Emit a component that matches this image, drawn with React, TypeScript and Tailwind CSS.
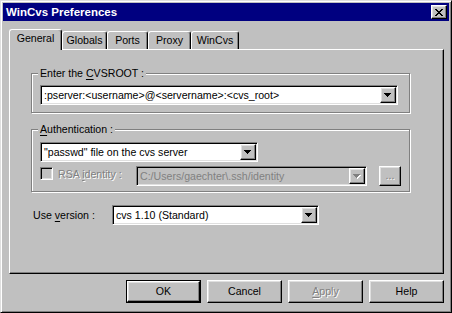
import type { ReactNode } from 'react'

const raised =
  'border border-t-white border-l-white border-r-black border-b-black shadow-[inset_-1px_-1px_#808080,inset_1px_1px_#dfdfdf]'
const sunken =
  'border border-t-[#808080] border-l-[#808080] border-r-white border-b-white shadow-[inset_1px_1px_#000,inset_-1px_-1px_#dfdfdf]'
const etched = "[text-shadow:1px_1px_0_#fff] text-[#808080]"

function Arrow({ disabled }: { disabled?: boolean }) {
  const rows = [
    [0, 7],
    [1, 5],
    [2, 3],
    [3, 1],
  ]
  return (
    <svg width="8" height="5" viewBox="0 0 8 5" shapeRendering="crispEdges">
      {disabled && (
        <g fill="#fff">
          {rows.map(([x, w], i) => (
            <rect key={i} x={x + 1} y={i + 1} width={w} height="1" />
          ))}
        </g>
      )}
      <g fill={disabled ? '#808080' : '#000'}>
        {rows.map(([x, w], i) => (
          <rect key={i} x={x} y={i} width={w} height="1" />
        ))}
      </g>
    </svg>
  )
}

function CloseGlyph() {
  const rows = [
    [0, 2, 6, 2],
    [1, 2, 5, 2],
    [2, 4],
    [3, 2],
    [2, 4],
    [1, 2, 5, 2],
    [0, 2, 6, 2],
  ]
  return (
    <svg width="8" height="7" viewBox="0 0 8 7" shapeRendering="crispEdges">
      {rows.map((r, i) => (
        <g key={i}>
          <rect x={r[0]} y={i} width={r[1]} height="1" />
          {r.length > 2 && <rect x={r[2]} y={i} width={r[3]} height="1" />}
        </g>
      ))}
    </svg>
  )
}

function Combo({ className, value, disabled }: { className: string; value: string; disabled?: boolean }) {
  return (
    <div
      className={`flex h-[20px] p-[1px] ${sunken} ${disabled ? 'bg-[#c0c0c0] text-[#808080]' : 'bg-white text-black'} ${className}`}
    >
      <div className="flex-1 overflow-hidden whitespace-nowrap pl-[2px] leading-[16px]">{value}</div>
      <div className={`flex h-[16px] w-[16px] items-center justify-center bg-[#c0c0c0] pt-[1px] ${raised}`}>
        <Arrow disabled={disabled} />
      </div>
    </div>
  )
}

function Group({ label, className, children }: { label: ReactNode; className: string; children: ReactNode }) {
  return (
    <div className={`flex w-[379px] flex-col border border-[#808080] pl-[8px] shadow-[inset_1px_1px_#fff,1px_1px_#fff] ${className}`}>
      <div className="-mt-[7px] -ml-[2px] self-start bg-[#c0c0c0] px-[2px]">{label}</div>
      {children}
    </div>
  )
}

function Tab({ label, active, className }: { label: string; active?: boolean; className: string }) {
  if (active) {
    return (
      <div
        className={`relative z-10 -mb-[1px] flex h-[21px] justify-center rounded-t-[3px] border-t border-r border-l border-t-white border-r-black border-l-white bg-[#c0c0c0] pt-[2px] shadow-[inset_-1px_0_#808080] ${className}`}
      >
        {label}
      </div>
    )
  }
  return (
    <div
      className={`flex h-[18px] justify-center rounded-t-[3px] border-t border-r border-l border-t-white border-r-black border-l-white pt-[2px] shadow-[inset_-1px_0_#808080] ${className}`}
    >
      {label}
    </div>
  )
}

function Button({ children, isDefault, disabled }: { children: ReactNode; isDefault?: boolean; disabled?: boolean }) {
  const text = disabled ? etched : ''
  if (isDefault) {
    return (
      <div className="h-[23px] w-[75px] border border-black">
        <div className={`flex h-full w-full items-center justify-center ${raised}`}>{children}</div>
      </div>
    )
  }
  return <div className={`flex h-[23px] w-[75px] items-center justify-center ${raised} ${text}`}>{children}</div>
}

export default function App() {
  return (
    <div className="h-[313px] w-[452px] overflow-hidden border border-t-[#dfdfdf] border-r-black border-b-black border-l-[#dfdfdf] bg-[#c0c0c0] p-[2px] font-['Liberation_Sans',Arial,sans-serif] text-[10.6px] leading-[13px] text-black shadow-[inset_1px_1px_#fff,inset_-1px_-1px_#808080]">
      {/* Title bar */}
      <div className="flex h-[18px] items-center justify-between bg-[#000080] pr-[2px] pl-[3px]">
        <span className="text-[11.5px] font-bold text-white">WinCvs Preferences</span>
        <div className={`flex h-[14px] w-[16px] items-center justify-center bg-[#c0c0c0] ${raised}`}>
          <CloseGlyph />
        </div>
      </div>

      {/* Tabs */}
      <div className="mt-[8px] ml-[6px] flex h-[20px] items-end">
        <Tab label="General" active className="w-[53px]" />
        <Tab label="Globals" className="w-[45px]" />
        <Tab label="Ports" className="w-[41px]" />
        <Tab label="Proxy" className="w-[43px]" />
        <Tab label="WinCvs" className="w-[48px]" />
      </div>

      {/* Panel */}
      <div className="ml-[6px] flex h-[225px] w-[435px] flex-col border border-t-white border-r-black border-b-black border-l-white pt-[23px] pl-[21px] shadow-[inset_-1px_-1px_#808080]">
        <Group
          className="h-[40px]"
          label={
            <>
              Enter the <span className="underline underline-offset-2">C</span>VSROOT :
            </>
          }
        >
          <Combo className="mt-[5px] w-[358px]" value=":pserver:<username>@<servername>:<cvs_root>" />
        </Group>

        <Group
          className="mt-[16px] h-[63px]"
          label={
            <>
              <span className="underline underline-offset-2">A</span>uthentication :
            </>
          }
        >
          <Combo className="mt-[6px] w-[218px]" value={'"passwd" file on the cvs server'} />
          <div className="mt-[4px] flex items-start">
            <div className={`mt-[1px] h-[13px] w-[13px] ${sunken}`} />
            <div className={`mt-[2px] ml-[5px] w-[78px] ${etched}`}>
              RSA <span className="underline underline-offset-2">i</span>dentity :
            </div>
            <Combo className="w-[231px]" value="C:/Users/gaechter\.ssh/identity" disabled />
            <div className={`ml-[12px] flex h-[20px] w-[22px] items-center justify-center pb-[2px] ${raised} ${etched}`}>
              ...
            </div>
          </div>
        </Group>

        <div className="mt-[13px] flex items-center pl-[2px]">
          <span className="w-[79px]">
            Use <span className="underline underline-offset-2">v</span>ersion :
          </span>
          <Combo className="w-[207px]" value="cvs 1.10 (Standard)" />
        </div>
      </div>

      {/* Buttons */}
      <div className="mt-[6px] flex w-[441px] justify-end gap-[6px]">
        <Button isDefault>OK</Button>
        <Button>Cancel</Button>
        <Button disabled>
          <span className="underline underline-offset-2">A</span>pply
        </Button>
        <Button>Help</Button>
      </div>
    </div>
  )
}
